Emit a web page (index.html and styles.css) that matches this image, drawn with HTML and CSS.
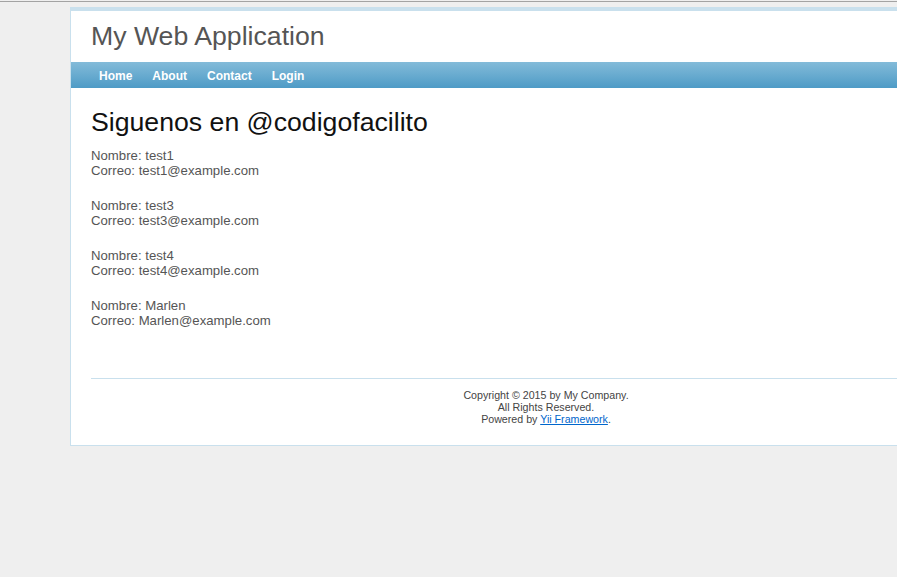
FILE: index.html
```html
<!DOCTYPE html>
<html>
<head>
<meta charset="utf-8">
<title>My Web Application</title>
<link rel="stylesheet" href="styles.css">
</head>
<body>
<div class="topline"></div>
<div class="page">
  <div class="header">
    <div class="logo">My Web Application</div>
  </div>
  <nav class="mainmenu">
    <ul>
      <li><a href="#">Home</a></li>
      <li><a href="#">About</a></li>
      <li><a href="#">Contact</a></li>
      <li><a href="#">Login</a></li>
    </ul>
  </nav>
  <div class="content">
    <h1>Siguenos en @codigofacilito</h1>
    <div class="entry">Nombre: test1<br>Correo: test1@example.com</div>
    <div class="entry">Nombre: test3<br>Correo: test3@example.com</div>
    <div class="entry">Nombre: test4<br>Correo: test4@example.com</div>
    <div class="entry">Nombre: Marlen<br>Correo: Marlen@example.com</div>
  </div>
  <div class="footer">
    Copyright &copy; 2015 by My Company.<br>
    All Rights Reserved.<br>
    Powered by <a href="#">Yii Framework</a>.
  </div>
</div>
</body>
</html>
```
FILE: styles.css
```css
html, body {
  margin: 0;
  padding: 0;
  background: #efefef;
  overflow: hidden;
}
body {
  color: #555;
  font-family: "Liberation Sans", Arial, sans-serif;
  font-size: 13.2px;
}
.topline {
  height: 1px;
  margin-top: 1px;
  background: #a3a3a3;
}
.page {
  width: 950px;
  margin: 5px 0 0 70px;
  background: #fff;
  border: 1px solid #c9e0ed;
  border-top-width: 4px;
}
.header {
  height: 51px;
  box-sizing: border-box;
  padding: 9px 20px 0;
}
.logo {
  font-size: 26.67px;
  line-height: 32px;
  color: #555;
}
.mainmenu {
  height: 26px;
  background: linear-gradient(#83bbd9, #4e9bc6);
}
.mainmenu ul {
  list-style: none;
  margin: 0;
  padding: 2px 20px 0;
  display: flex;
  gap: 4px;
}
.mainmenu a {
  display: block;
  padding: 0 8px;
  color: #fff;
  font-weight: bold;
  font-size: 12px;
  line-height: 24px;
  text-decoration: none;
}
.content {
  padding: 17px 20px 0;
}
.content h1 {
  margin: 0 0 9px;
  font-size: 26.67px;
  line-height: 34px;
  font-weight: normal;
  color: #111;
}
.entry {
  line-height: 15px;
  margin-bottom: 20px;
}
.entry:last-child {
  margin-bottom: 0;
}
.footer {
  margin: 50px 20px 0;
  border-top: 1px solid #c9e0ed;
  padding: 10px 0 20px;
  text-align: center;
  font-size: 10.67px;
  line-height: 12px;
  color: #444;
}
.footer a {
  color: #06c;
  text-decoration: underline;
}
```
